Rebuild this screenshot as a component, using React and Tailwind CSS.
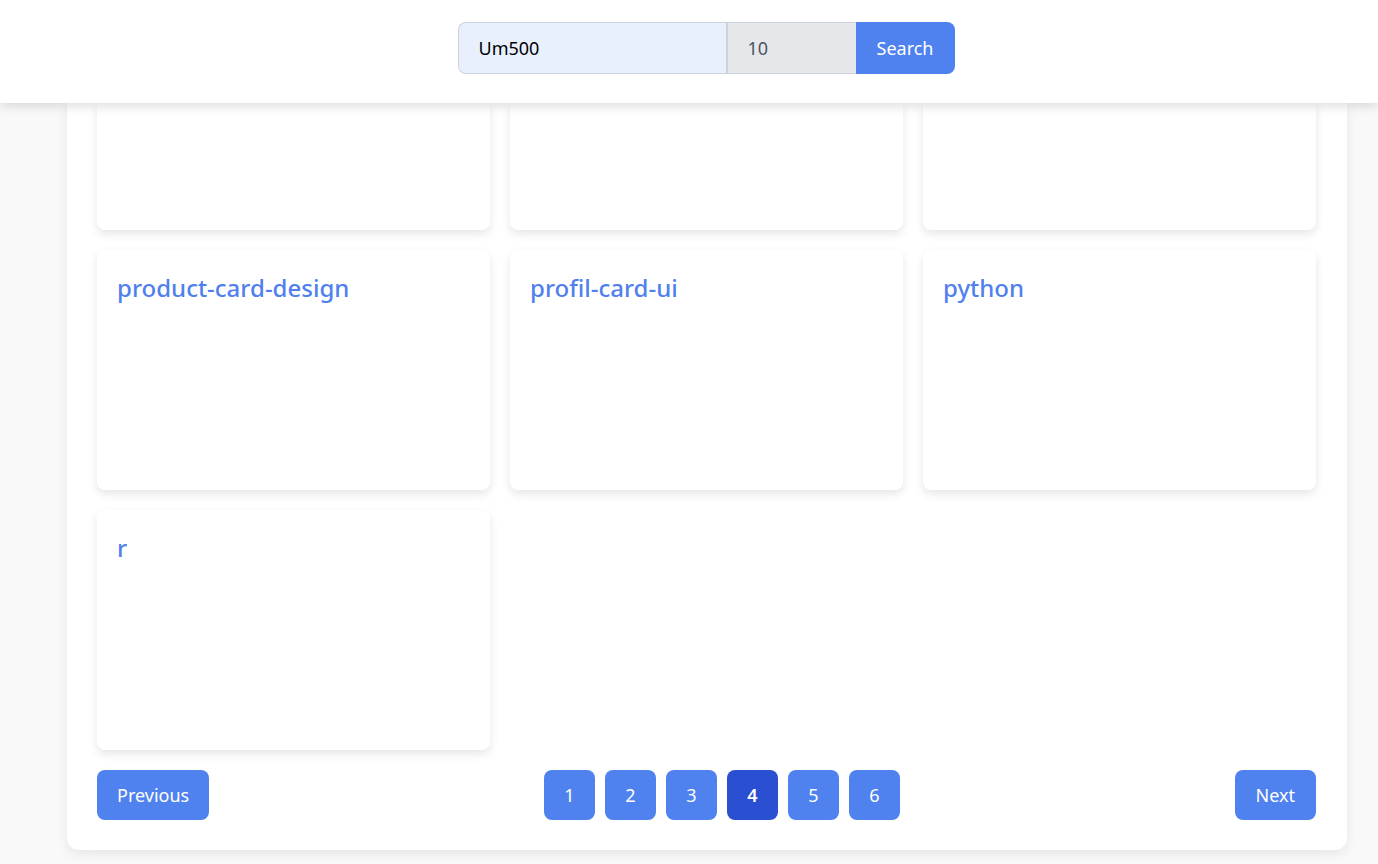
import { useState } from "react";

const topRow = ["", "", ""];
const repos = ["product-card-design", "profil-card-ui", "python", "r"];
const pages = [1, 2, 3, 4, 5, 6];

function App() {
  const [query, setQuery] = useState("Um500");
  const [perPage, setPerPage] = useState("10");
  const current = 4;

  return (
    <div
      className="min-h-screen bg-[#f9f9f9]"
      style={{ fontFamily: '"Noto Sans", "Open Sans", sans-serif' }}
    >
      <header className="relative z-10 flex h-[103px] justify-center bg-white pl-[34px] pt-[22px] shadow-[0_4px_10px_rgba(0,0,0,0.12)]">
        <form className="flex h-[52px]" onSubmit={(e) => e.preventDefault()}>
          <input
            type="text"
            value={query}
            onChange={(e) => setQuery(e.target.value)}
            className="w-[268px] rounded-l-lg border border-r-0 border-[#cdd3dc] bg-[#e8f0fe] px-5 text-lg text-black outline-none"
          />
          <input
            type="text"
            value={perPage}
            onChange={(e) => setPerPage(e.target.value)}
            className="w-[130px] border-y border-l-2 border-[#cdd3dc] bg-[#e5e7eb] px-5 text-lg text-[#4b5563] outline-none"
          />
          <button className="w-[99px] rounded-r-lg bg-[#4f82ee] text-lg text-white">
            Search
          </button>
        </form>
      </header>

      <main className="ml-[67px] w-[1280px] rounded-b-xl bg-white pl-[30px] pr-[31px] pb-[30px] shadow-[0_4px_12px_rgba(0,0,0,0.08)]">
        <div className="grid grid-cols-3 gap-5">
          {topRow.map((_, i) => (
            <div
              key={i}
              className="h-[127px] rounded-b-lg bg-white shadow-[0_4px_10px_rgba(0,0,0,0.1)]"
            ></div>
          ))}
          {repos.map((name) => (
            <div
              key={name}
              className="h-[240px] rounded-lg bg-white px-5 pt-[22px] shadow-[0_4px_10px_rgba(0,0,0,0.1)]"
            >
              <h2 className="text-2xl font-medium text-[#5080ee]">{name}</h2>
            </div>
          ))}
        </div>

        <div className="mt-5 flex items-center justify-between">
          <button className="h-[50px] rounded-lg bg-[#4f82ee] px-5 text-lg text-white">
            Previous
          </button>
          <div className="flex gap-[10px]">
            {pages.map((p) => (
              <button
                key={p}
                className={
                  p === current
                    ? "h-[50px] w-[51px] rounded-lg bg-[#2b4fd1] text-lg font-semibold text-white"
                    : "h-[50px] w-[51px] rounded-lg bg-[#4f82ee] text-lg text-white"
                }
              >
                {p}
              </button>
            ))}
          </div>
          <button className="h-[50px] rounded-lg bg-[#4f82ee] px-[21px] text-lg text-white">
            Next
          </button>
        </div>
      </main>
    </div>
  );
}

export default App;
